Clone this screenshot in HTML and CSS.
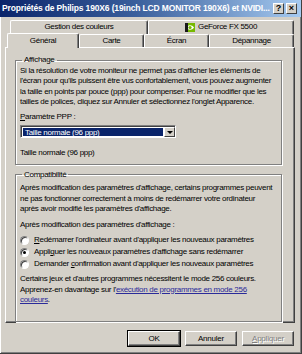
FILE: index.html
```html
<!DOCTYPE html>
<html lang="fr">
  <head>
    <meta charset="UTF-8" />
    <title>Propriétés d'affichage</title>
    <link rel="stylesheet" href="styles.css">
  </head>
  <body>
    <div class="window">
      <div class="titlebar">
        <span class="title">Propriétés de Philips 190X6 (19inch LCD MONITOR 190X6) et NVIDI...</span>
        <div class="tb-buttons">
          <span class="tb-btn">?</span>
          <span class="tb-btn">&#215;</span>
        </div>
      </div>

      <div class="tabs">
        <div class="tab-row back">
          <div class="tab tab-color">Gestion des couleurs</div>
          <div class="tab tab-geforce">
            <svg class="nv-icon" width="10" height="9" viewBox="0 0 10 9">
              <rect width="10" height="9" fill="#76b900" />
              <path d="M1 4.5 C3 1.5 7 1.5 9 4.5 C7 7.5 3 7.5 1 4.5 Z" fill="#fff" />
              <circle cx="5" cy="4.5" r="1.6" fill="#76b900" />
              <rect x="0" y="0" width="3" height="9" fill="#1a1a1a" />
            </svg>
            GeForce FX 5500
          </div>
        </div>
        <div class="tab-row front">
          <div class="tab tab-general selected">Général</div>
          <div class="tab tab-carte">Carte</div>
          <div class="tab tab-ecran">Écran</div>
          <div class="tab tab-depannage">Dépannage</div>
        </div>
      </div>

      <div class="panel">
        <fieldset class="group group-display">
          <legend>Affichage</legend>
          <p class="text">Si la résolution de votre moniteur ne permet pas d'afficher les éléments de<br>l'écran pour qu'ils puissent être vus confortablement, vous pouvez augmenter<br>la taille en points par pouce (ppp) pour compenser. Pour ne modifier que les<br>tailles de polices, cliquez sur Annuler et sélectionnez l'onglet Apparence.</p>
          <p class="label"><u>P</u>aramètre PPP :</p>
          <div class="select">
            <span class="select-value">Taille normale (96 ppp)</span>
            <span class="select-btn"><span class="arrow"></span></span>
          </div>
          <p class="current">Taille normale (96 ppp)</p>
        </fieldset>

        <fieldset class="group group-compat">
          <legend>Compatibilité</legend>
          <p class="text">Après modification des paramètres d'affichage, certains programmes peuvent<br>ne pas fonctionner correctement à moins de redémarrer votre ordinateur<br>après avoir modifié les paramètres d'affichage.</p>
          <p class="label">Après modification des paramètres d'affichage :</p>
          <div class="radios">
            <div class="radio-row"><span class="radio"></span><span><u>R</u>edémarrer l'ordinateur avant d'appliquer les nouveaux paramètres</span></div>
            <div class="radio-row"><span class="radio checked"></span><span>Appli<u>q</u>uer les nouveaux paramètres d'affichage sans redémarrer</span></div>
            <div class="radio-row"><span class="radio"></span><span>Demander <u>c</u>onfirmation avant d'appliquer les nouveaux paramètres</span></div>
          </div>
          <p class="text note">Certains jeux et d'autres programmes nécessitent le mode 256 couleurs.<br>Apprenez-en davantage sur l'<a href="#" class="link">exécution de programmes en mode 256<br>couleurs</a>.</p>
        </fieldset>
      </div>

      <div class="buttons">
        <button class="btn btn-default">OK</button>
        <button class="btn">Annuler</button>
        <button class="btn" disabled><u>A</u>ppliquer</button>
      </div>
    </div>
  </body>
</html>
```

FILE: styles.css
```css
* {
  box-sizing: border-box;
}
body {
  margin: 0;
  font-family: "Liberation Sans", Arial, sans-serif;
  font-size: 8px;
  letter-spacing: -0.3px;
  line-height: 10.5px;
  color: #000;
}
p {
  margin: 0;
  white-space: nowrap;
}
.window {
  width: 302px;
  height: 354px;
  background: #d4d0c8;
  border-right: 1px solid #404040;
  border-bottom: 1px solid #404040;
  box-shadow: inset 1px 0 0 #fff, inset -1px -1px 0 #808080;
  display: flex;
  flex-direction: column;
}
.titlebar {
  height: 17px;
  display: flex;
  align-items: center;
  justify-content: space-between;
  padding: 0 4px 0 2px;
  background: linear-gradient(to right, #0a246a 0%, #3a5f9c 45%, #a6caf0 100%);
}
.title {
  color: #fff;
  font-weight: bold;
  font-size: 8.5px;
  letter-spacing: -0.15px;
  white-space: nowrap;
}
.tb-buttons {
  display: flex;
  gap: 2px;
}
.tb-btn {
  width: 11px;
  height: 11px;
  background: #d4d0c8;
  border: 1px solid;
  border-color: #fff #404040 #404040 #fff;
  font: bold 9px/9px "Liberation Sans", Arial, sans-serif;
  letter-spacing: 0;
  text-align: center;
}

/* onglets */
.tabs {
  margin-top: 3px;
}
.tab-row {
  display: flex;
  height: 14px;
}
.tab-row.back {
  padding-left: 10px;
}
.tab-row.front {
  padding-left: 7px;
}
.tab {
  display: flex;
  align-items: center;
  justify-content: center;
  gap: 3px;
  background: #d4d0c8;
  border-top: 1px solid #fff;
  border-left: 1px solid #fff;
  border-right: 1px solid #404040;
  box-shadow: inset -1px 0 0 #808080;
  border-radius: 2px 2px 0 0;
}
.tab-color {
  width: 138px;
}
.tab-geforce {
  width: 146px;
}
.tab-general {
  width: 72px;
}
.tab-carte,
.tab-ecran {
  width: 65px;
}
.tab-depannage {
  width: 85px;
}
.tab.selected {
  position: relative;
  z-index: 1;
  height: 15px;
  margin-top: -1px;
}
.nv-icon {
  display: block;
}

/* panneau */
.panel {
  margin: 0 6px 0 5px;
  height: 276px;
  margin-top: -1px;
  border: 1px solid;
  border-color: #fff #404040 #404040 #fff;
  box-shadow: inset -1px -1px 0 #808080;
  padding: 7px 12px 0 9px;
}
.group {
  margin: 0;
  border: 1px solid #808080;
  box-shadow: 1px 1px 0 #fff, inset 1px 1px 0 #fff;
  padding: 0 6px 5px 4px;
  min-width: 0;
}
.group legend {
  padding: 0 2px;
  margin-left: 2px;
}
.group-compat {
  margin-top: 5px;
  padding-bottom: 15px;
}
.group-compat > .text:first-of-type {
  margin-top: 3px;
}
.label {
  margin-top: 4px;
}
.group-compat .label {
  margin-top: 5px;
}

/* liste déroulante */
.select {
  display: flex;
  width: 156px;
  height: 13px;
  margin-top: 3px;
  background: #fff;
  border: 1px solid;
  border-color: #808080 #fff #fff #808080;
  box-shadow: inset 1px 1px 0 #404040;
  padding: 1px 0 0 1px;
}
.select-value {
  flex: 1;
  background: #0a246a;
  color: #fff;
  line-height: 9px;
  padding-left: 2px;
  margin: 1px;
}
.select-btn {
  width: 11px;
  display: flex;
  align-items: center;
  justify-content: center;
  background: #d4d0c8;
  border: 1px solid;
  border-color: #fff #404040 #404040 #fff;
}
.arrow {
  width: 0;
  height: 0;
  border-left: 3px solid transparent;
  border-right: 3px solid transparent;
  border-top: 3px solid #000;
}
.current {
  margin-top: 10px;
}

/* boutons radio */
.radios {
  margin-top: 4px;
}
.radio-row {
  display: flex;
  align-items: center;
  gap: 5px;
  height: 12px;
  white-space: nowrap;
}
.radio {
  flex: none;
  width: 9px;
  height: 9px;
  border-radius: 50%;
  background: #fff;
  border: 1px solid;
  border-color: #808080 #fff #fff #808080;
  box-shadow: inset 1px 1px 0 #404040;
  display: flex;
  align-items: center;
  justify-content: center;
}
.radio.checked::after {
  content: "";
  width: 3px;
  height: 3px;
  border-radius: 50%;
  background: #000;
}
.note {
  margin-top: 4px;
}
.link {
  color: #2b2b9a;
}

/* boutons */
.buttons {
  display: flex;
  justify-content: flex-end;
  gap: 5px;
  padding: 8px 7px 0 0;
}
.btn {
  width: 52px;
  height: 15px;
  padding: 0;
  font-family: "Liberation Sans", Arial, sans-serif;
  font-size: 8px;
  letter-spacing: -0.2px;
  color: #000;
  background: #d4d0c8;
  border: 1px solid;
  border-color: #fff #404040 #404040 #fff;
  box-shadow: inset -1px -1px 0 #808080;
}
.btn-default {
  outline: 1px solid #000;
}
.btn:disabled {
  color: #808080;
  text-shadow: 1px 1px 0 #fff;
}
```
